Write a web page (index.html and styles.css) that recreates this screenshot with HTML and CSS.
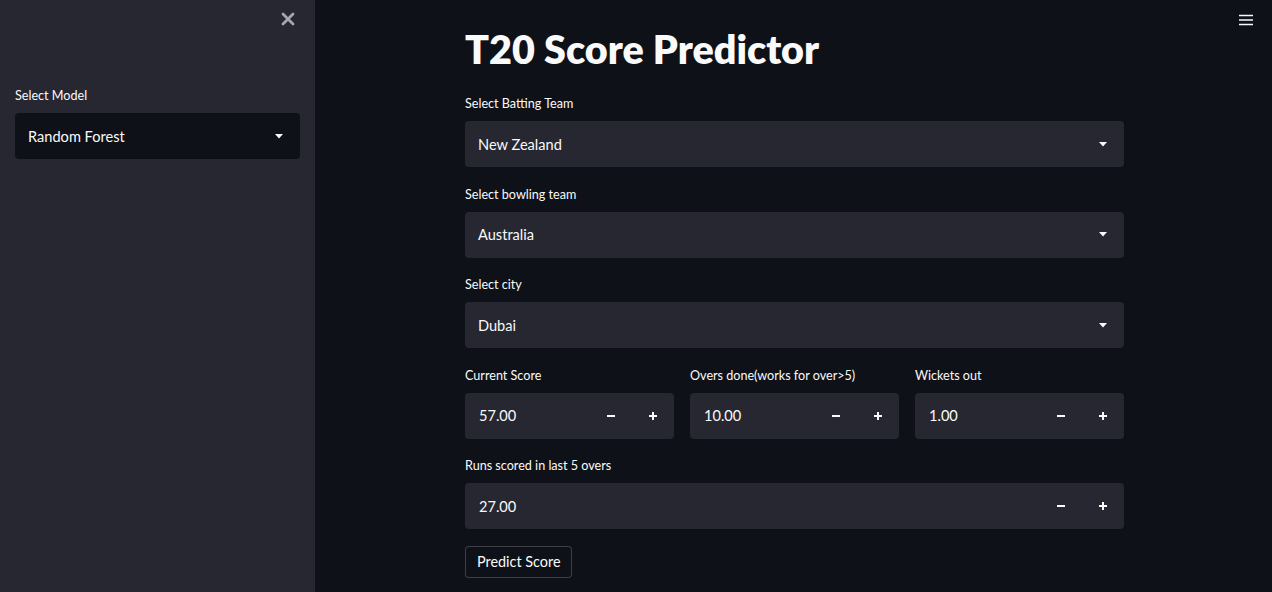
FILE: index.html
```html
<!DOCTYPE html>
<html>
<head>
<meta charset="utf-8">
<link rel="stylesheet" href="styles.css">
</head>
<body>
<aside class="sidebar">
  <div class="side-top">
    <svg class="close" width="14" height="14" viewBox="0 0 14 14"><path d="M2 2L12 12M12 2L2 12" stroke="#a3a8b4" stroke-width="2.8" stroke-linecap="round"/></svg>
  </div>
  <div class="widget">
    <div class="label">Select Model</div>
    <div class="select dark">
      <span>Random Forest</span>
      <svg class="caret" width="8" height="5" viewBox="0 0 8 5"><path d="M0 0H8L4 4.5Z" fill="#fafafa"/></svg>
    </div>
  </div>
</aside>
<main class="main">
  <svg class="menu" width="14" height="12" viewBox="0 0 14 12"><path d="M0 1.5H14M0 6H14M0 10.5H14" stroke="#fafafa" stroke-width="1.6"/></svg>
  <div class="block">
    <h1 class="title">T20 Score Predictor</h1>
    <div class="form">
      <div class="widget">
        <div class="label">Select Batting Team</div>
        <div class="select"><span>New Zealand</span><svg class="caret" width="8" height="5" viewBox="0 0 8 5"><path d="M0 0H8L4 4.5Z" fill="#fafafa"/></svg></div>
      </div>
      <div class="widget">
        <div class="label">Select bowling team</div>
        <div class="select"><span>Australia</span><svg class="caret" width="8" height="5" viewBox="0 0 8 5"><path d="M0 0H8L4 4.5Z" fill="#fafafa"/></svg></div>
      </div>
      <div class="widget">
        <div class="label">Select city</div>
        <div class="select"><span>Dubai</span><svg class="caret" width="8" height="5" viewBox="0 0 8 5"><path d="M0 0H8L4 4.5Z" fill="#fafafa"/></svg></div>
      </div>
      <div class="row">
        <div class="widget">
          <div class="label">Current Score</div>
          <div class="number"><span class="val">57.00</span><span class="btn"><svg width="10" height="10" viewBox="0 0 10 10"><path d="M1 5H9" stroke="#fafafa" stroke-width="2"/></svg></span><span class="btn"><svg width="10" height="10" viewBox="0 0 10 10"><path d="M1 5H9M5 1V9" stroke="#fafafa" stroke-width="2"/></svg></span></div>
        </div>
        <div class="widget">
          <div class="label">Overs done(works for over&gt;5)</div>
          <div class="number"><span class="val">10.00</span><span class="btn"><svg width="10" height="10" viewBox="0 0 10 10"><path d="M1 5H9" stroke="#fafafa" stroke-width="2"/></svg></span><span class="btn"><svg width="10" height="10" viewBox="0 0 10 10"><path d="M1 5H9M5 1V9" stroke="#fafafa" stroke-width="2"/></svg></span></div>
        </div>
        <div class="widget">
          <div class="label">Wickets out</div>
          <div class="number"><span class="val">1.00</span><span class="btn"><svg width="10" height="10" viewBox="0 0 10 10"><path d="M1 5H9" stroke="#fafafa" stroke-width="2"/></svg></span><span class="btn"><svg width="10" height="10" viewBox="0 0 10 10"><path d="M1 5H9M5 1V9" stroke="#fafafa" stroke-width="2"/></svg></span></div>
        </div>
      </div>
      <div class="widget">
        <div class="label">Runs scored in last 5 overs</div>
        <div class="number"><span class="val">27.00</span><span class="btn"><svg width="10" height="10" viewBox="0 0 10 10"><path d="M1 5H9" stroke="#fafafa" stroke-width="2"/></svg></span><span class="btn"><svg width="10" height="10" viewBox="0 0 10 10"><path d="M1 5H9M5 1V9" stroke="#fafafa" stroke-width="2"/></svg></span></div>
      </div>
      <div><button class="predict">Predict Score</button></div>
    </div>
  </div>
</main>
</body>
</html>
```
FILE: styles.css
```css
* { box-sizing: border-box; }
html, body { margin: 0; height: 100%; }
body {
  display: flex;
  font-family: Lato, "Open Sans", sans-serif;
  color: #fafafa;
  background: #0e1117;
  overflow: hidden;
}
.sidebar {
  width: 315px;
  flex: none;
  background: #262730;
  padding: 0 15px;
}
.side-top {
  height: 85px;
  display: flex;
  justify-content: flex-end;
  align-items: flex-start;
  padding-top: 12px;
  padding-right: 5px;
}
.main {
  flex: 1;
  position: relative;
  padding-left: 150px;
}
.menu {
  position: absolute;
  top: 14px;
  right: 19px;
}
.block { width: 659px; }
.title {
  margin: 0;
  padding-top: 26px;
  font-size: 39.5px;
  line-height: 46px;
  font-weight: 800;
  letter-spacing: 0;
  height: 93px;
}
.form {
  display: flex;
  flex-direction: column;
  gap: 16.5px;
}
.widget { display: flex; flex-direction: column; }
.label {
  font-size: 12.6px;
  line-height: 20px;
  height: 20px;
  padding-top: 1px;
  margin-bottom: 8px;
}
.select {
  height: 46px;
  background: #262730;
  border-radius: 4px;
  display: flex;
  align-items: center;
  justify-content: space-between;
  padding: 0 17px 0 13px;
  font-size: 14.6px;
}
.select.dark { background: #0e1117; }
.caret { display: block; }
.row {
  display: grid;
  grid-template-columns: 1fr 1fr 1fr;
  gap: 16px;
}
.number {
  height: 46px;
  background: #262730;
  border-radius: 4px;
  display: flex;
  align-items: center;
  font-size: 14.6px;
}
.val { flex: 1; padding-left: 14px; }
.btn {
  width: 42px;
  height: 46px;
  display: flex;
  align-items: center;
  justify-content: center;
}
.btn svg { display: block; }
.predict {
  height: 32px;
  padding: 0 11px;
  background: #0e1117;
  color: #fafafa;
  border: 1px solid rgba(250, 250, 250, 0.2);
  border-radius: 4px;
  font-family: Lato, "Open Sans", sans-serif;
  font-size: 14.4px;
}
```
